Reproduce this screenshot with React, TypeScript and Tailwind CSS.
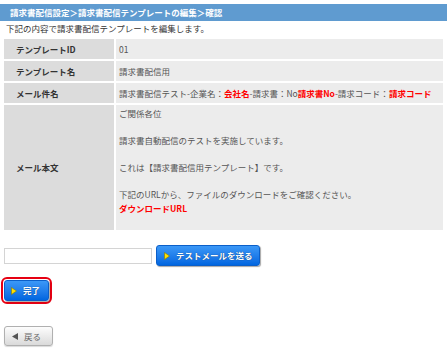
import React from 'react'

const font = "font-['Noto_Sans_CJK_JP',sans-serif]"

function PlayIcon() {
  return (
    <svg width="6" height="8" viewBox="0 0 6 8" className="shrink-0">
      <path d="M0.5 0.5 L5.5 4 L0.5 7.5 Z" fill="#ffe100" stroke="#8a7a00" strokeWidth="0.6" />
    </svg>
  )
}

function BlueButton({ label, className = '' }: { label: string; className?: string }) {
  return (
    <button
      className={
        'flex items-center gap-[6px] h-[21px] rounded-[3px] border border-[#0b5fc9] bg-gradient-to-b from-[#3b98f7] to-[#0066e0] text-white text-[8.5px] font-bold shadow-[1px_1px_1px_rgba(0,0,0,0.35)] [text-shadow:0_0_1px_rgba(0,0,0,0.6)] ' +
        className
      }
    >
      <PlayIcon />
      <span>{label}</span>
    </button>
  )
}

const rows = [
  { label: 'テンプレートID', value: <span>01</span> },
  { label: 'テンプレート名', value: <span>請求書配信用</span> },
  {
    label: 'メール件名',
    value: (
      <span>
        請求書配信テスト-企業名：<b className="text-[#ff0000]">会社名</b>-請求書：No<b className="text-[#ff0000]">請求書No</b>-請求コード：<b className="text-[#ff0000]">請求コード</b>
      </span>
    ),
  },
]

export default function App() {
  return (
    <div className={`${font} w-[447px] h-[349px] bg-white text-[8.5px] text-[#333] overflow-hidden`}>
      {/* パンくず */}
      <div className="mt-[4px] h-[17px] bg-[#5f9bd0] pl-[10px] flex items-center text-white font-bold text-[8.5px]">
        請求書配信設定＞請求書配信テンプレートの編集＞確認
      </div>

      <div className="pl-[6px] h-[18px] leading-[14px]">下記の内容で請求書配信テンプレートを編集します。</div>

      {/* 確認テーブル */}
      <div className="mx-[4px] grid grid-cols-[110px_1fr] gap-[2px]">
        {rows.map((r) => (
          <React.Fragment key={r.label}>
            <div className="h-[20px] bg-[#dcdcdc] pl-[12px] flex items-center font-bold text-[#333]">{r.label}</div>
            <div className="h-[20px] bg-[#ececec] pl-[3px] flex items-center text-[#555] whitespace-nowrap">{r.value}</div>
          </React.Fragment>
        ))}
        <div className="bg-[#dcdcdc] pl-[12px] flex items-center font-bold text-[#333]">メール本文</div>
        <div className="bg-[#ececec] pl-[3px] pt-[2px] pb-[15px] leading-[13.5px] text-[#555]">
          <div>ご関係各位</div>
          <div>&nbsp;</div>
          <div>請求書自動配信のテストを実施しています。</div>
          <div>&nbsp;</div>
          <div>これは【請求書配信用テンプレート】です。</div>
          <div>&nbsp;</div>
          <div>下記のURLから、ファイルのダウンロードをご確認ください。</div>
          <div className="font-bold text-[#ff0000]">ダウンロードURL</div>
        </div>
      </div>

      {/* テスト送信 */}
      <div className="mt-[15px] ml-[4px] flex items-center gap-[4px]">
        <input type="text" className="w-[148px] h-[16px] border border-[#d4d4d4] bg-white outline-none" />
        <BlueButton label="テストメールを送る" className="w-[104px] pl-[7px]" />
      </div>

      {/* 完了 */}
      <div className="mt-[11px] ml-[1px] w-[51px] h-[27px] rounded-[6px] border-2 border-[#e60012] flex items-center justify-center">
        <BlueButton label="完了" className="w-[45px] pl-[6px]" />
      </div>

      {/* 戻る */}
      <button className="mt-[22px] ml-[4px] w-[49px] h-[20px] rounded-[3px] border border-[#b0b0b0] bg-gradient-to-b from-[#fdfdfd] to-[#dadada] flex items-center gap-[6px] pl-[7px] text-[#666] text-[8.5px] shadow-[0_1px_1px_rgba(0,0,0,0.15)]">
        <svg width="6" height="7" viewBox="0 0 6 7">
          <path d="M6 0 L0 3.5 L6 7 Z" fill="#555" />
        </svg>
        <span>戻る</span>
      </button>
    </div>
  )
}
